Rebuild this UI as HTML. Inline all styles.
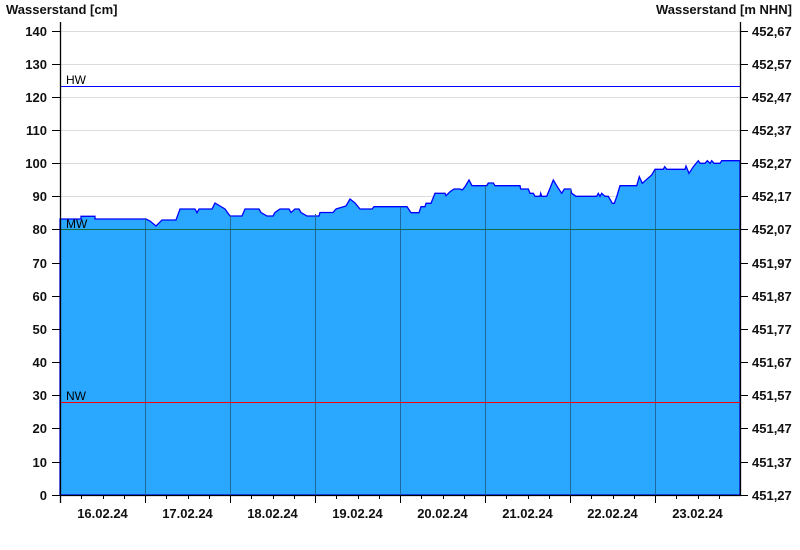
<!DOCTYPE html>
<html><head><meta charset="utf-8"><style>
html,body{margin:0;padding:0;background:#fff;width:800px;height:550px;overflow:hidden}
svg text{font-family:"Liberation Sans",Arial,sans-serif}
</style></head><body>
<svg width="800" height="550" viewBox="0 0 800 550" xmlns="http://www.w3.org/2000/svg">
<g stroke="#dcdcdc" stroke-width="1">
<line x1="60" y1="31.5" x2="740" y2="31.5"/><line x1="60" y1="64.5" x2="740" y2="64.5"/>
<line x1="60" y1="97.5" x2="740" y2="97.5"/><line x1="60" y1="130.5" x2="740" y2="130.5"/>
<line x1="60" y1="163.5" x2="740" y2="163.5"/><line x1="60" y1="196.5" x2="740" y2="196.5"/>
</g>
<polygon fill="#2aa8ff" stroke="#0000ff" stroke-width="1.3" stroke-linejoin="miter" points="
60,219 81,219 81,216.3 95,216.3 95,219 146,219 150,221 156,226 162,220 176,220 180,209 195,209 197,212.7 199,209 212,209 215,203 220,206 225,209 230,216 242,216 245,209 259,209 261,212.5 267,216 273,216 275,212.5 280,209 289,209 291,212.5 295,209 299,209 301,212.5 307,216 319,216 320,212.5 333,212.5 336,209 346,206 350,199 355,203 360,209 372,209 374,206.7 407,206.7 411,212.7 419,212.7 421,206.7 425,206.7 426,203.3 431,203.3 435,193.3 445,193.3 446,195.7 450,191.7 454,189 460,189 462.3,190 465,186.7 469,180 472,185.7 486.7,185.7 488.3,183 493.3,183 495,185.7 520,185.7 520.7,189 528.3,189 530,193.3 533.3,193.3 535,196.3 540,196.3 540.7,193.3 541.7,196.3 546.7,196.3 550,188.3 553.3,180 558.3,188.3 561.7,193.3 564.3,189 570.7,189 571.7,193.3 576,196.3 596.7,196.3 598.3,193.3 600,196.3 601.7,193.3 605,196.3 608.3,196.3 612.3,203.3 614.3,203.3 616.7,196.7 620,185.7 636.7,185.7 639.3,176.7 642.3,183.3 646.7,179.3 651.7,175 655,169.3 663.3,169.3 664.7,166.7 666.7,169.3 685,169.3 686,166 689,173.3 693.3,166.7 698.3,160.7 700,163.3 705,163.3 707.3,160.7 710,163.3 711.7,160.7 714,163.3 720,163.3 721.7,160.7 740,160.7 740,495 60,495"/>
<g stroke="#1d6aa0" stroke-width="1">
<line x1="145.5" y1="218" x2="145.5" y2="495"/><line x1="230.5" y1="216" x2="230.5" y2="495"/>
<line x1="315.5" y1="214" x2="315.5" y2="495"/><line x1="400.5" y1="207" x2="400.5" y2="495"/>
<line x1="485.5" y1="186" x2="485.5" y2="495"/><line x1="570.5" y1="189" x2="570.5" y2="495"/>
<line x1="655.5" y1="170" x2="655.5" y2="495"/>
</g>
<line x1="60" y1="86.5" x2="740" y2="86.5" stroke="#0000ff" stroke-width="1"/>
<line x1="60" y1="229.5" x2="740" y2="229.5" stroke="#126a46" stroke-width="1"/>
<line x1="60" y1="402.5" x2="740" y2="402.5" stroke="#ff0000" stroke-width="1"/>
<g font-size="12" fill="#000"><text x="66" y="84">HW</text><text x="66" y="228">MW</text><text x="66" y="400">NW</text></g>
<g stroke="#000" stroke-width="1.3">
<line x1="60.5" y1="22" x2="60.5" y2="503"/><line x1="740.5" y1="22" x2="740.5" y2="495"/>
<line x1="60" y1="495.5" x2="741" y2="495.5"/>
</g>
<g stroke="#000" stroke-width="1">
<path d="M52,31.5h8M52,64.5h8M52,97.5h8M52,130.5h8M52,163.5h8M52,196.5h8M52,229.5h8M52,263.5h8M52,296.5h8M52,329.5h8M52,362.5h8M52,395.5h8M52,428.5h8M52,462.5h8M52,495.5h8"/>
<path d="M740,31.5h8M740,64.5h8M740,97.5h8M740,130.5h8M740,163.5h8M740,196.5h8M740,229.5h8M740,263.5h8M740,296.5h8M740,329.5h8M740,362.5h8M740,395.5h8M740,428.5h8M740,462.5h8M740,495.5h8"/>
<path d="M145.5,495v8M230.5,495v8M315.5,495v8M400.5,495v8M485.5,495v8M570.5,495v8M655.5,495v8"/>
<path d="M81.5,495v4M103.5,495v4M124.5,495v4M166.5,495v4M188.5,495v4M209.5,495v4M251.5,495v4M273.5,495v4M294.5,495v4M336.5,495v4M358.5,495v4M379.5,495v4M421.5,495v4M443.5,495v4M464.5,495v4M506.5,495v4M528.5,495v4M549.5,495v4M591.5,495v4M613.5,495v4M634.5,495v4M676.5,495v4M698.5,495v4M719.5,495v4"/>
</g>
<g font-size="13" font-weight="bold" fill="#111">
<text x="6" y="14">Wasserstand [cm]</text>
<text x="792" y="14" text-anchor="end">Wasserstand [m NHN]</text>
</g>
<g font-size="13" font-weight="bold" fill="#111" text-anchor="end">
<text x="47" y="36">140</text><text x="47" y="69">130</text><text x="47" y="102">120</text><text x="47" y="135">110</text>
<text x="47" y="168">100</text><text x="47" y="201">90</text><text x="47" y="234">80</text><text x="47" y="268">70</text>
<text x="47" y="301">60</text><text x="47" y="334">50</text><text x="47" y="367">40</text><text x="47" y="400">30</text>
<text x="47" y="433">20</text><text x="47" y="467">10</text><text x="47" y="500">0</text>
</g>
<g font-size="13" font-weight="bold" fill="#111">
<text x="752" y="36">452,67</text><text x="752" y="69">452,57</text><text x="752" y="102">452,47</text><text x="752" y="135">452,37</text>
<text x="752" y="168">452,27</text><text x="752" y="201">452,17</text><text x="752" y="234">452,07</text><text x="752" y="268">451,97</text>
<text x="752" y="301">451,87</text><text x="752" y="334">451,77</text><text x="752" y="367">451,67</text><text x="752" y="400">451,57</text>
<text x="752" y="433">451,47</text><text x="752" y="467">451,37</text><text x="752" y="500">451,27</text>
</g>
<g font-size="13" font-weight="bold" fill="#111" text-anchor="middle">
<text x="102.5" y="518">16.02.24</text><text x="187.5" y="518">17.02.24</text><text x="272.5" y="518">18.02.24</text>
<text x="357.5" y="518">19.02.24</text><text x="442.5" y="518">20.02.24</text><text x="527.5" y="518">21.02.24</text>
<text x="612.5" y="518">22.02.24</text><text x="697.5" y="518">23.02.24</text>
</g>
</svg>
</body></html>
